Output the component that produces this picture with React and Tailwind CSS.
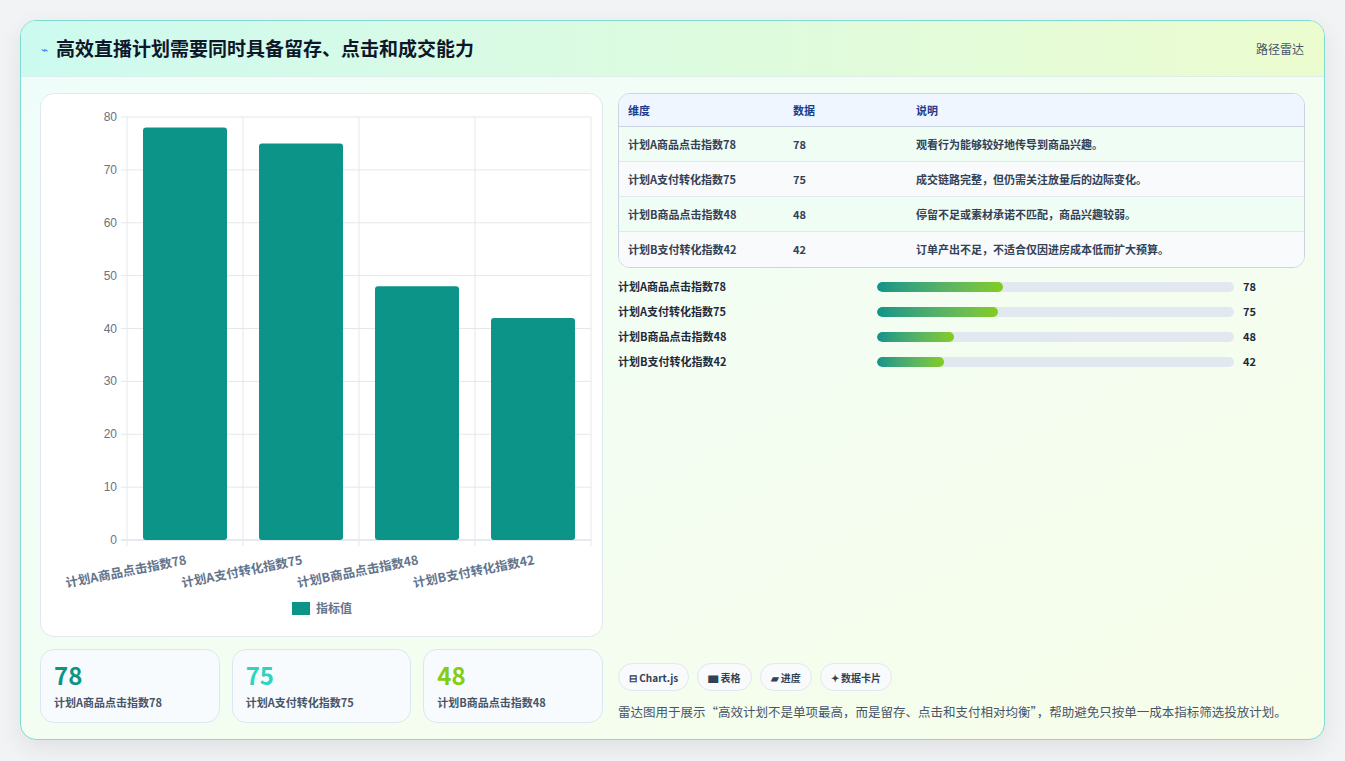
export default function App() {
  const F = { fontFamily: '"Noto Sans CJK SC","Noto Sans",sans-serif' };
  const data = [
    ["计划A商品点击指数78", 78, "观看行为能够较好地传导到商品兴趣。", 35.3],
    ["计划A支付转化指数75", 75, "成交链路完整，但仍需关注放量后的边际变化。", 33.9],
    ["计划B商品点击指数48", 48, "停留不足或素材承诺不匹配，商品兴趣较弱。", 21.6],
    ["计划B支付转化指数42", 42, "订单产出不足，不适合仅因进房成本低而扩大预算。", 18.8],
  ];
  const L = 86, R = 550, T = 23, B = 446;
  const y = (v) => B - (v / 80) * (B - T);
  return (
    <div className="w-[1345px] h-[761px] bg-[#f1f3f4] pt-[20px] pl-[20px]" style={F}>
      <div className="w-[1305px] h-[720px] rounded-[16px] border border-[#7fdcd0] overflow-hidden shadow-[0_8px_24px_rgba(0,0,0,0.08)] flex flex-col bg-gradient-to-br from-[#effdfb] to-[#f7fde9]">
        <div className="h-[56px] shrink-0 flex items-center justify-between px-[20px] bg-gradient-to-r from-[#cdfaf0] to-[#ecfccf] border-b border-[#dcefe9]">
          <div className="flex items-center gap-[8px]">
            <span className="text-[#3b82f6] text-[12px]">⌁</span>
            <span className="text-[19px] font-bold text-[#0f172a]">高效直播计划需要同时具备留存、点击和成交能力</span>
          </div>
          <span className="text-[12px] text-[#475569]">路径雷达</span>
        </div>
        <div className="flex-1 flex gap-[15px] px-[19px] pt-[16px] pb-[18px]">
          <div className="w-[563px] flex flex-col gap-[12px]">
            <div className="h-[544px] bg-white rounded-[14px] border border-[#e2e8f0]">
              <svg width="562" height="544" style={{ fontFamily: '"Liberation Sans",sans-serif' }}>
                {[0,10,20,30,40,50,60,70,80].map((v) => (
                  <g key={v}>
                    <line x1={L - 6} x2={R} y1={y(v)} y2={y(v)} stroke={v === 0 ? "#cbd5e1" : "#e5e7eb"} />
                    <text x={L - 10} y={y(v) + 4} fontSize="12" fill="#6b7280" textAnchor="end">{v}</text>
                  </g>
                ))}
                {[0,1,2,3,4].map((i) => (
                  <line key={i} x1={L + i * 116} x2={L + i * 116} y1={T} y2={B + 6} stroke="#e5e7eb" />
                ))}
                {data.map((d, i) => {
                  const cx = L + 58 + i * 116;
                  return (
                    <g key={i}>
                      <rect x={cx - 42} y={y(d[1])} width="84" height={B - y(d[1])} rx="3" fill="#0d9488" />
                      <text x={cx + 2} y={B + 24} fontSize="12.5" fontWeight="bold" fill="#64748b" textAnchor="end" transform={`rotate(-11 ${cx + 2} ${B + 24})`} style={F}>{d[0]}</text>
                    </g>
                  );
                })}
                <rect x="251" y="508" width="18" height="13" fill="#0d9488" />
                <text x="275" y="519" fontSize="12" fontWeight="bold" fill="#64748b" style={F}>指标值</text>
              </svg>
            </div>
            <div className="grid grid-cols-3 gap-[12px]">
              {[["78","#0d9488",0],["75","#2dd4bf",1],["48","#84cc16",2]].map(([v,c,i]) => (
                <div key={v} className="h-[74px] rounded-[14px] border border-[#dbe7f0] bg-[#f8fbfd] px-[13px] pt-[10px]">
                  <div className="text-[24px] font-bold leading-[30px]" style={{ color: c }}>{v}</div>
                  <div className="text-[11px] font-bold text-[#475569] mt-[4px]">{data[i][0]}</div>
                </div>
              ))}
            </div>
          </div>
          <div className="flex-1 flex flex-col">
            <div className="rounded-[12px] border border-[#cbd5e1] overflow-hidden bg-white">
              <div className="h-[33px] flex items-center bg-[#eff6ff] border-b border-[#cbd5e1] text-[11px] font-bold text-[#1e3a8a] px-[9px]">
                <div className="w-[165px]">维度</div><div className="w-[123px]">数据</div><div>说明</div>
              </div>
              {data.map((d, i) => (
                <div key={i} className={`h-[35px] flex items-center text-[11px] font-bold text-[#334155] px-[9px] ${i < 3 ? "border-b border-[#e2e8f0]" : ""} ${i % 2 ? "bg-[#f8fafc]" : "bg-[#f0fdf4]"}`}>
                  <div className="w-[165px]">{d[0]}</div><div className="w-[123px]">{d[1]}</div><div>{d[2]}</div>
                </div>
              ))}
            </div>
            <div className="flex flex-col gap-[8px] mt-[10px]">
              {data.map((d, i) => (
                <div key={i} className="h-[17px] flex items-center text-[11px] font-bold text-[#1e293b]">
                  <div className="w-[259px]">{d[0]}</div>
                  <div className="w-[357px] h-[10px] rounded-full bg-[#e2e8f0] overflow-hidden">
                    <div className="h-full rounded-full bg-gradient-to-r from-[#0d9488] to-[#84cc16]" style={{ width: d[3] + "%" }} />
                  </div>
                  <div className="ml-[9px]">{d[1]}</div>
                </div>
              ))}
            </div>
            <div className="flex-1" />
            <div className="flex gap-[8px] text-[10px] font-bold text-[#334155]">
              {["⊟ Chart.js", "▆ 表格", "▰ 进度", "✦ 数据卡片"].map((t) => (
                <span key={t} className="h-[28px] px-[10px] flex items-center rounded-full border border-[#e2e8f0] bg-[#f8fafc]">{t}</span>
              ))}
            </div>
            <div className="text-[12.5px] text-[#475569] mt-[12px] mb-[1px]">雷达图用于展示“高效计划不是单项最高，而是留存、点击和支付相对均衡”，帮助避免只按单一成本指标筛选投放计划。</div>
          </div>
        </div>
      </div>
    </div>
  );
}
